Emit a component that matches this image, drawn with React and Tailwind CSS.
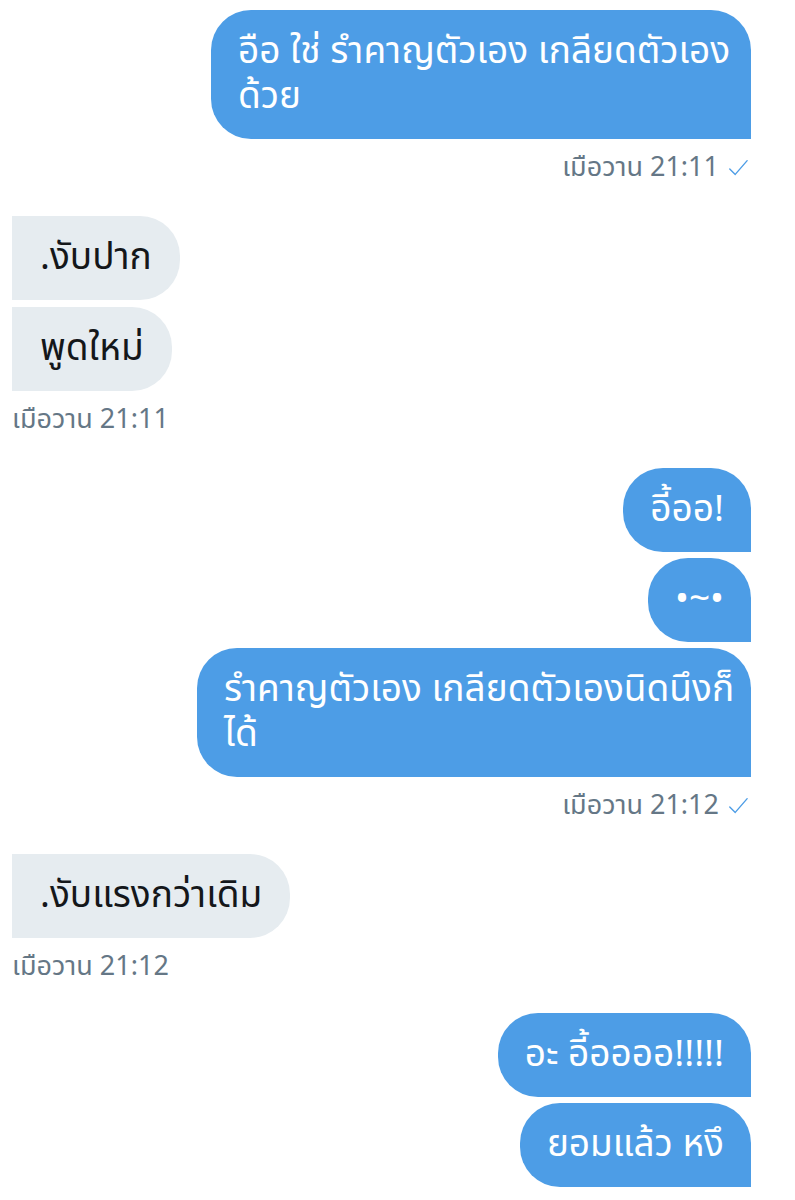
import React from 'react';

function Check() {
  return (
    <svg className="ml-[8px] h-[22px] w-[22px] text-[#4d9de6]" viewBox="0 0 24 24" fill="none" stroke="currentColor" strokeWidth={1.5}>
      <path d="M3 13l6 6L22 4" strokeLinecap="round" strokeLinejoin="round" />
    </svg>
  );
}

function Sent({ children, className = '' }) {
  return (
    <div className={`whitespace-nowrap rounded-[40px] rounded-br-none bg-[#4d9de6] px-[27px] py-[19.5px] text-[37px] leading-[45px] text-white ${className}`}>
      {children}
    </div>
  );
}

function Received({ children }) {
  return (
    <div className="whitespace-nowrap rounded-r-[40px] bg-[#e6ecf0] px-[28px] py-[19.5px] text-[37px] leading-[45px] text-[#14171a]">
      {children}
    </div>
  );
}

function Stamp({ time, mine }) {
  return (
    <div className={`mt-[14px] flex items-center text-[27px] leading-[30px] text-[#657786] ${mine ? 'justify-end pr-[2px]' : ''}`}>
      <span>เมือวาน {time}</span>
      {mine && <Check />}
    </div>
  );
}

export default function App() {
  const font = { fontFamily: '"Noto Sans Thai", "Noto Sans", "DejaVu Sans", sans-serif' };
  return (
    <div className="min-h-[1200px] w-[795px] overflow-hidden bg-white pl-[12px] pr-[44px] pt-[10px]" style={font}>
      <div className="flex flex-col items-end">
        <Sent className="w-[540px]">
          อือ ใช่ รำคาญตัวเอง เกลียดตัวเอง<br />ด้วย
        </Sent>
      </div>
      <Stamp time="21:11" mine />

      <div className="mt-[33px] flex flex-col items-start gap-[7px]">
        <Received>.งับปาก</Received>
        <Received>พูดใหม่</Received>
      </div>
      <Stamp time="21:11" />

      <div className="mt-[33px] flex flex-col items-end gap-[6px]">
        <Sent>อี้ออ!</Sent>
        <Sent>•~•</Sent>
        <Sent className="w-[554px]">
          รำคาญตัวเอง เกลียดตัวเองนิดนึงก็<br />ได้
        </Sent>
      </div>
      <Stamp time="21:12" mine />

      <div className="mt-[33px] flex flex-col items-start">
        <Received>.งับแรงกว่าเดิม</Received>
      </div>
      <Stamp time="21:12" />

      <div className="mt-[31px] flex flex-col items-end gap-[6px]">
        <Sent>อะ อี้ออออ!!!!!</Sent>
        <Sent>ยอมแล้ว หงึ</Sent>
      </div>
    </div>
  );
}
